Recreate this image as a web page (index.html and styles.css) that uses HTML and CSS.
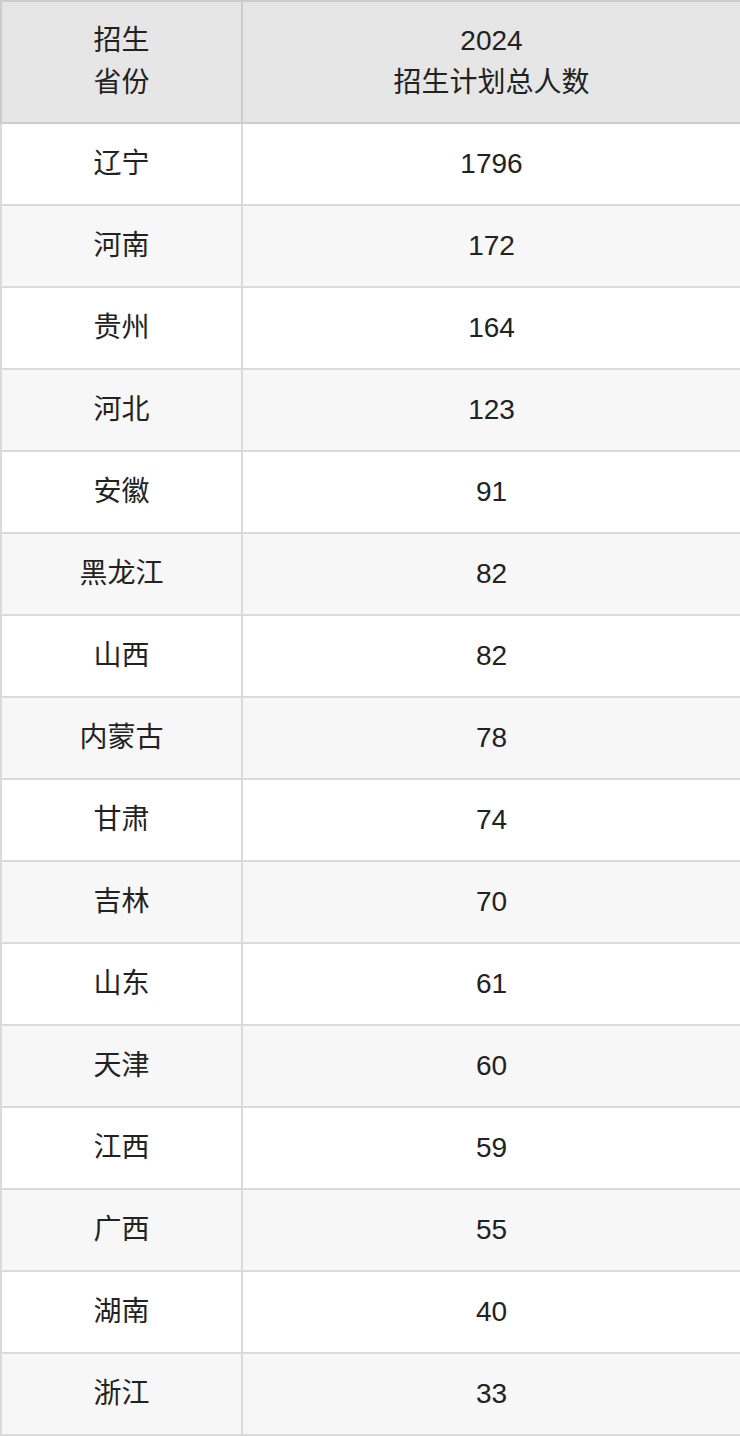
FILE: index.html
```html
<!DOCTYPE html>
<html lang="zh-CN">
<head>
<meta charset="utf-8">
<title>招生计划</title>
<link rel="stylesheet" href="styles.css">
</head>
<body>
<table class="plan">
  <colgroup><col class="c1"><col class="c2"></colgroup>
  <thead>
    <tr><th>招生<br>省份</th><th>2024<br>招生计划总人数</th></tr>
  </thead>
  <tbody>
    <tr><td>辽宁</td><td>1796</td></tr>
    <tr><td>河南</td><td>172</td></tr>
    <tr><td>贵州</td><td>164</td></tr>
    <tr><td>河北</td><td>123</td></tr>
    <tr><td>安徽</td><td>91</td></tr>
    <tr><td>黑龙江</td><td>82</td></tr>
    <tr><td>山西</td><td>82</td></tr>
    <tr><td>内蒙古</td><td>78</td></tr>
    <tr><td>甘肃</td><td>74</td></tr>
    <tr><td>吉林</td><td>70</td></tr>
    <tr><td>山东</td><td>61</td></tr>
    <tr><td>天津</td><td>60</td></tr>
    <tr><td>江西</td><td>59</td></tr>
    <tr><td>广西</td><td>55</td></tr>
    <tr><td>湖南</td><td>40</td></tr>
    <tr><td>浙江</td><td>33</td></tr>
  </tbody>
</table>
</body>
</html>
```
FILE: styles.css
```css
html, body {
  margin: 0;
  padding: 0;
  background: #ffffff;
}
.plan {
  width: 740px;
  border-collapse: collapse;
  table-layout: fixed;
  font-family: "Liberation Sans", "Noto Sans CJK SC", sans-serif;
  font-size: 28px;
  color: #222222;
}
.plan .c1 { width: 241px; }
.plan .c2 { width: 499px; }
.plan th, .plan td {
  border: 2px solid #dadada;
  text-align: center;
  vertical-align: middle;
  padding: 0;
}
.plan th {
  background: #e6e6e6;
  font-weight: normal;
  height: 120px;
  line-height: 42px;
  border-color: #cccccc;
}
.plan td {
  height: 80px;
  line-height: 40px;
}
.plan tbody tr:nth-child(even) td {
  background: #f7f7f7;
}
```
